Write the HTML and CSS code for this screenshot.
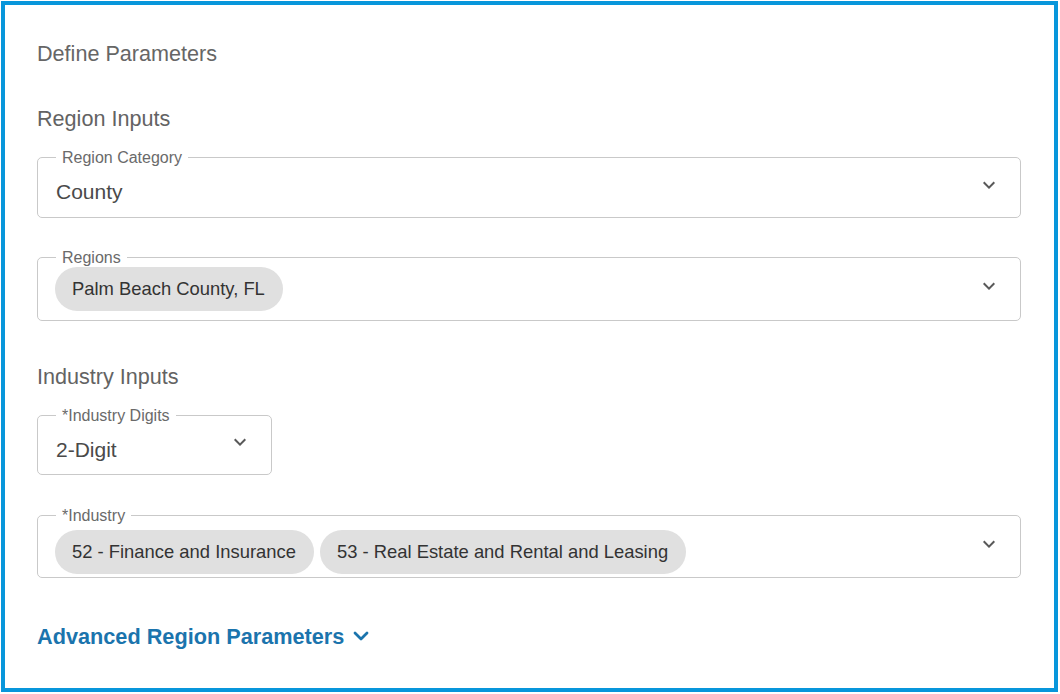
FILE: index.html
```html
<!DOCTYPE html>
<html lang="en">
<head>
<meta charset="utf-8">
<title>Define Parameters</title>
<link rel="stylesheet" href="styles.css">
</head>
<body>
<div class="frame">
  <div class="title">Define Parameters</div>

  <div class="section-title first">Region Inputs</div>

  <div class="field f-cat">
    <span class="field-label">Region Category</span>
    <div class="field-value">County</div>
    <svg class="chev" viewBox="0 0 24 24" width="24" height="24"><path d="M16.59 8.59L12 13.17 7.41 8.59 6 10l6 6 6-6z"/></svg>
  </div>

  <div class="field f-regions">
    <span class="field-label">Regions</span>
    <div class="chips">
      <span class="chip">Palm Beach County, FL</span>
    </div>
    <svg class="chev" viewBox="0 0 24 24" width="24" height="24"><path d="M16.59 8.59L12 13.17 7.41 8.59 6 10l6 6 6-6z"/></svg>
  </div>

  <div class="section-title second">Industry Inputs</div>

  <div class="field f-digits">
    <span class="field-label">*Industry Digits</span>
    <div class="field-value">2-Digit</div>
    <svg class="chev" viewBox="0 0 24 24" width="24" height="24"><path d="M16.59 8.59L12 13.17 7.41 8.59 6 10l6 6 6-6z"/></svg>
  </div>

  <div class="field f-industry">
    <span class="field-label">*Industry</span>
    <div class="chips">
      <span class="chip">52 - Finance and Insurance</span>
      <span class="chip">53 - Real Estate and Rental and Leasing</span>
    </div>
    <svg class="chev" viewBox="0 0 24 24" width="24" height="24"><path d="M16.59 8.59L12 13.17 7.41 8.59 6 10l6 6 6-6z"/></svg>
  </div>

  <div class="advanced">
    <span>Advanced Region Parameters</span>
    <svg class="adv-chev" viewBox="0 0 16 10" width="16" height="10"><polyline points="2,2 8,8 14,2" fill="none" stroke="currentColor" stroke-width="2.8" stroke-linecap="round" stroke-linejoin="round"/></svg>
  </div>
</div>
</body>
</html>
```

FILE: styles.css
```css
* { box-sizing: border-box; }

html, body {
  margin: 0;
  padding: 0;
  background: #ffffff;
}

body {
  font-family: "Liberation Sans", Arial, sans-serif;
  color: #666666;
}

.frame {
  margin: 1px 2px 2px 1px;
  height: 691px;
  border: 4px solid #0896db;
  padding: 37px 33px 0 32px;
  display: flex;
  flex-direction: column;
}

.title {
  font-size: 21.6px;
  line-height: 24px;
  color: #666666;
}

.section-title {
  font-size: 21.6px;
  line-height: 24px;
  color: #636363;
}

.section-title.first {
  margin-top: 41px;
  margin-bottom: 26px;
}

.section-title.second {
  margin-top: 44px;
  margin-bottom: 26px;
}

.field {
  position: relative;
  display: flex;
  align-items: center;
  border: 1px solid #c9c9c9;
  border-radius: 5px;
  padding: 0 19px 0 18px;
}

.field-label {
  position: absolute;
  top: -9px;
  left: 18px;
  padding: 0 6px;
  background: #ffffff;
  font-size: 16px;
  line-height: 18px;
  color: #6a6a6a;
}

.field-value {
  flex: 1;
  padding: 21px 0 13px;
  font-size: 21px;
  line-height: 25px;
  color: #4a4a4a;
}

.f-digits {
  width: 235px;
}

.f-digits .field-value {
  padding-bottom: 12px;
}

.f-regions {
  margin-top: 39px;
  padding-left: 17px;
}

.f-industry {
  margin-top: 40px;
  padding-left: 17px;
}

.chips {
  flex: 1;
  display: flex;
  gap: 6px;
  padding: 9px 0;
}

.f-industry .chips {
  padding: 14px 0 3px;
}

.chip {
  display: inline-flex;
  align-items: center;
  height: 44px;
  padding: 0 18px 0 17px;
  border-radius: 22px;
  background: #e0e0e0;
  color: #333333;
  font-size: 18.4px;
}

.chev {
  flex: none;
  fill: #595959;
  margin-top: -6px;
}

.advanced {
  margin-top: 47px;
  display: flex;
  align-items: center;
  gap: 9px;
  font-size: 21.7px;
  line-height: 24px;
  font-weight: bold;
  color: #1b74ad;
}

.adv-chev {
  color: #1b74ad;
  margin-top: -2px;
}
```
